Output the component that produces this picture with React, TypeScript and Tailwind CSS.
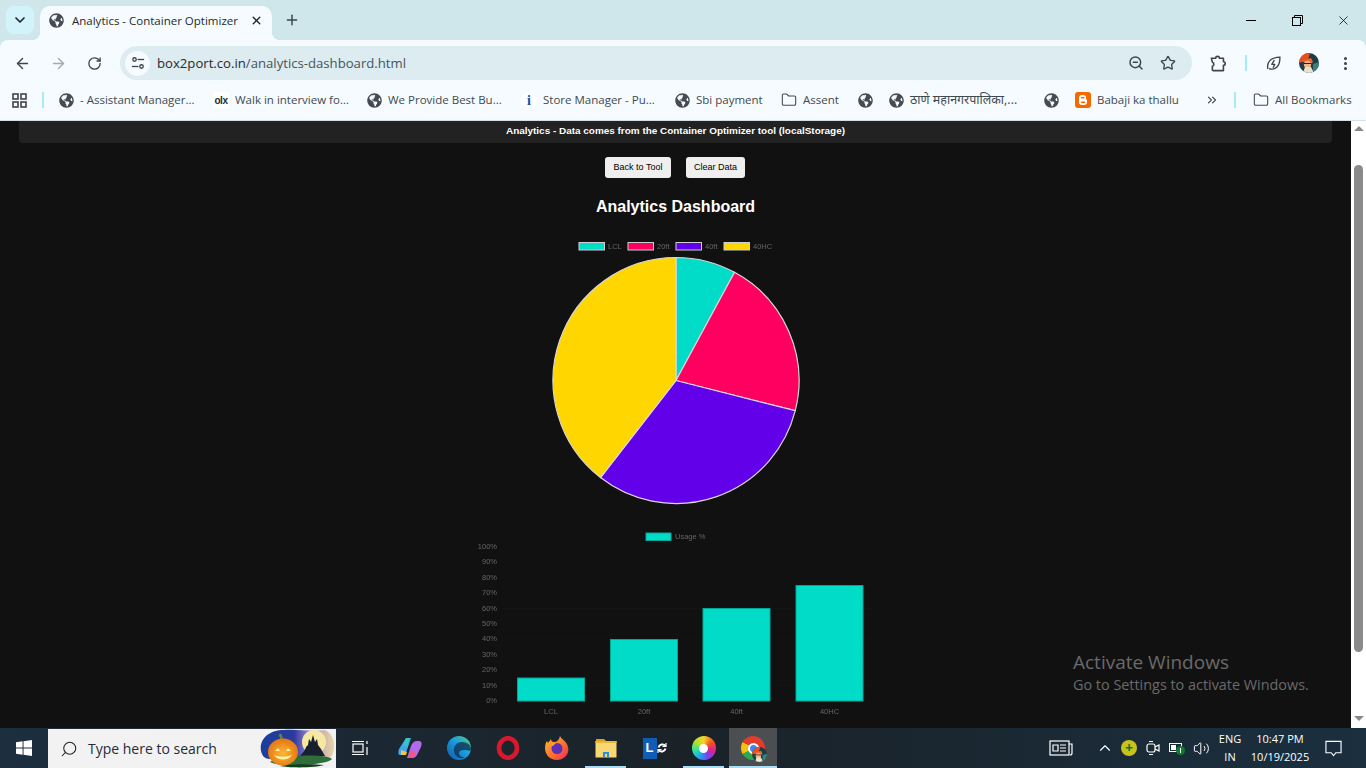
import React from "react";
import {
  ArrowLeft,
  ArrowRight,
  RotateCw,
  ZoomOut,
  Star,
  MoreVertical,
  X,
  Plus,
  ChevronDown,
  ChevronUp,
  ChevronsRight,
  Folder,
  Search,
  Volume2,
} from "lucide-react";
import { FaGlobeAmericas } from "react-icons/fa";

const UI_FONT = "font-['Open_Sans','Noto_Sans',sans-serif]";

const Globe = () => <FaGlobeAmericas className="w-[15px] h-[15px] shrink-0 text-[#454b50]" />;

const Olx = () => (
  <span className="w-4 h-4 shrink-0 bg-white flex items-center justify-center text-[10px] font-bold text-[#1c2b33] tracking-tighter font-['Liberation_Sans',sans-serif]">
    olx
  </span>
);

const InfoDot = () => (
  <span className="w-4 h-4 shrink-0 bg-white rounded-full flex items-center justify-center text-[14px] font-bold text-[#1c4fa0] font-['Liberation_Serif',serif]">
    i
  </span>
);

const Blogger = () => (
  <svg viewBox="0 0 16 16" className="w-4 h-4 shrink-0">
    <rect width="16" height="16" rx="3" fill="#f56a00" />
    <path d="M4 6a3 3 0 0 1 3-3h1.5A2.5 2.5 0 0 1 11 5.5V7l1 1v2a3 3 0 0 1-3 3H7a3 3 0 0 1-3-3z" fill="#fff" />
    <path d="M6.5 5.7h2.4M6.5 10.2h3.2" stroke="#f56a00" strokeWidth="1.4" strokeLinecap="round" />
  </svg>
);

const Bookmark = ({ icon, text, className, textClass }: { icon: React.ReactNode; text?: string; className: string; textClass?: string }) => (
  <div className={`flex items-center gap-[6px] shrink-0 ${className}`}>
    {icon}
    {text && <span className={`whitespace-nowrap ${textClass ?? ""}`}>{text}</span>}
  </div>
);

const TuneIcon = () => (
  <svg viewBox="0 0 16 16" className="w-[14px] h-[14px]" fill="none" stroke="#3c474d" strokeWidth="1.5">
    <circle cx="4" cy="4" r="2" />
    <path d="M7.5 4H15" />
    <circle cx="12" cy="12" r="2" />
    <path d="M1 12h7.5" />
  </svg>
);

const PuzzleIcon = () => (
  <svg viewBox="0 0 18 18" className="w-[17px] h-[17px]" fill="none" stroke="#3c474d" strokeWidth="1.7" strokeLinejoin="round">
    <path d="M1.5 3.5H6a2 2 0 0 1 4 0h4.2v3.7a1.9 1.9 0 0 1 0 3.8v5.5H3.5a1 1 0 0 1-1-1V12a2.3 2.3 0 0 0 0-4.4z" />
  </svg>
);

const LeafIcon = () => (
  <svg viewBox="0 0 20 20" className="w-[17px] h-[17px]" fill="none" stroke="#3c474d" strokeWidth="1.6">
    <path d="M3.5 16.5C1.5 9 6 3 17.5 2.5 18 13 12 18.5 4.8 16" />
    <path d="M11 6l-3 5h3.5l-2 4" strokeLinejoin="round" />
  </svg>
);

const Avatar = ({ className }: { className: string }) => (
  <svg viewBox="0 0 20 20" className={className}>
    <defs>
      <clipPath id="avatar-clip">
        <circle cx="10" cy="10" r="10" />
      </clipPath>
    </defs>
    <g clipPath="url(#avatar-clip)">
      <rect width="20" height="20" fill="#1f3b45" />
      <path d="M0 0h11L9 7 0 10z" fill="#e8501e" />
      <path d="M3 8l9-3 2 4-4 3z" fill="#f26a2c" />
      <circle cx="8.5" cy="11.5" r="3.6" fill="#f2b48a" />
      <path d="M4 20l2-6 6 0 3 6z" fill="#e9e1cf" />
      <path d="M14 11l6-2v11h-6z" fill="#3d7f7a" />
      <path d="M5 10.5h7" stroke="#222" strokeWidth="1" />
    </g>
  </svg>
);

const WinLogo = () => (
  <svg viewBox="0 0 17 17" className="w-4 h-4" fill="#fff">
    <path d="M0 2.4 7 1.4V8H0zM8 1.3 17 0v8H8zM0 9h7v6.6L0 14.6zM8 9h9v8l-9-1.3z" />
  </svg>
);

const Pumpkin = () => (
  <svg viewBox="0 0 76 39" className="w-[76px] h-[39px]">
    <defs>
      <linearGradient id="sky" x1="0" x2="1" y1="0" y2="0">
        <stop offset="0" stopColor="#1d3f9c" />
        <stop offset="0.45" stopColor="#2b3a9c" />
        <stop offset="0.7" stopColor="#b58fd8" />
        <stop offset="1" stopColor="#e8d89a" />
      </linearGradient>
      <radialGradient id="pumpkin-body" cx="0.5" cy="0.55" r="0.6">
        <stop offset="0" stopColor="#ffb638" />
        <stop offset="1" stopColor="#e0700c" />
      </radialGradient>
    </defs>
    <path d="M1 22C-1 10 9 1 24 1c14-1 28 2 41 0 8 3 11 14 8 23-2 6-6 8-10 6H10C5 30 2 27 1 22z" fill="url(#sky)" />
    <circle cx="54" cy="13" r="12" fill="#f4e8a2" />
    <path d="M40 27c3-4 5-5 6-9l2-2 1-6 2 3 2-7 2 7 2-3 1 6 3 4 4 7z" fill="#17202c" />
    <path d="M10 33c10-7 56-9 62-3-4 6-52 9-62 3z" fill="#2f6d3a" />
    <path d="M20 37c10-2 34-2 44-1-8 3-36 3-44 1z" fill="#123d1d" />
    <path d="M20 5l2 6" stroke="#5c8a3b" strokeWidth="2.6" />
    <ellipse cx="23" cy="23" rx="15" ry="13.5" fill="url(#pumpkin-body)" />
    <path d="M15 22l3-3 2 3zM31 22l-3-3-2 3z" fill="#fff3a6" />
    <path d="M14 26c4 6 14 6 18 0-5 2-13 2-18 0z" fill="#fff3a6" />
  </svg>
);

const Copilot = () => (
  <svg viewBox="0 0 24 24" className="w-6 h-6">
    <path d="M8 2h5l-4 12c-1 3-2 5-5 5H2C0 19 0 16 1 13z" fill="#3fa6f0" />
    <path d="M8 2h4L9 11 5 9z" fill="#37c6c0" />
    <path d="M14 22H9l4-12c1-3 3-5 6-5h2c3 0 3 3 2 6l-3 6c-1 3-3 5-6 5z" fill="#b36ae8" />
    <path d="M3 14l6 2-1 3H3z" fill="#f5c542" />
    <path d="M13 22h-3l3-8 5 3c-1 3-2 5-5 5z" fill="#f0568a" />
  </svg>
);

const Edge = () => (
  <svg viewBox="0 0 24 24" className="w-6 h-6">
    <defs>
      <linearGradient id="edge-a" x1="0" x2="1" y1="1" y2="0">
        <stop offset="0" stopColor="#0c59a4" />
        <stop offset="0.55" stopColor="#1b9de2" />
        <stop offset="1" stopColor="#52d17c" />
      </linearGradient>
    </defs>
    <circle cx="12" cy="12" r="12" fill="url(#edge-a)" />
    <path d="M24 13c0-4-4-7-9-7-6 0-9 5-8 10 1 4 5 7 10 6 2-1-5 0-5-5 0-2 2-3 5-3 4 0 7 2 7-1z" fill="#0e2a47" fillOpacity="0.72" />
  </svg>
);

const Opera = () => (
  <svg viewBox="0 0 24 24" className="w-6 h-6" fill="none">
    <ellipse cx="12" cy="12" rx="9" ry="9.8" stroke="#d8182c" strokeWidth="4.6" />
  </svg>
);

const Firefox = () => (
  <svg viewBox="0 0 24 24" className="w-6 h-6">
    <defs>
      <linearGradient id="ff-a" x1="0" x2="1" y1="0" y2="1">
        <stop offset="0" stopColor="#ffbd2e" />
        <stop offset="0.6" stopColor="#ff6a2c" />
        <stop offset="1" stopColor="#e8216a" />
      </linearGradient>
    </defs>
    <path d="M15 0c1 3 7 5 8 11 2 7-4 13-11 13S0 19 0 12c0-3 1-6 2-7l1 2 3-4c0 2 1 3 3 3 3 0 5-2 6-6z" fill="url(#ff-a)" />
    <circle cx="12" cy="12.5" r="5.5" fill="#5b2fb8" />
    <path d="M3 8c3-2 6-2 8-1l-3 3c-2 0-4 0-5-2z" fill="#ff9a1f" />
  </svg>
);

const Explorer = () => (
  <svg viewBox="0 0 22 20" className="w-[22px] h-5">
    <path d="M1 1h8l2 2H1z" fill="#d9a21f" />
    <rect x="0.5" y="3" width="21" height="16.5" fill="#f8d775" />
    <rect x="0.5" y="3" width="21" height="2" fill="#eab93a" />
    <path d="M8 19.5V14h6v5.5h-2V16h-2v3.5z" fill="#2a8fd8" />
  </svg>
);

const Lync = () => (
  <div className="flex items-center">
    <span className="w-[14px] h-[21px] bg-[#0f5db5] flex items-center justify-center text-white text-[13px] font-bold font-['Liberation_Sans',sans-serif]">
      L
    </span>
    <svg viewBox="0 0 10 12" className="w-[10px] h-3" fill="none" stroke="#fff" strokeWidth="2">
      <path d="M8.5 4A4 4 0 0 0 1.5 5.5M1.5 8A4 4 0 0 0 8.5 6.5" />
      <path d="M9 1v3.5H5.5M1 11V7.500h3.500" strokeWidth="1.2" />
    </svg>
  </div>
);

const ColorRing = () => (
  <span className="w-6 h-6 rounded-full bg-[conic-gradient(#f6d32d,#f5561d,#e0218a,#7b3ff2,#20a4f3,#2ee59d,#b7e21f,#f6d32d)] flex items-center justify-center">
    <span className="w-[9px] h-[9px] rounded-full bg-white" />
  </span>
);

const ChromeAvatar = () => (
  <span className="relative w-6 h-6 rounded-full bg-[conic-gradient(#e33b2e_0deg,#e33b2e_120deg,#2da94f_120deg,#2da94f_240deg,#f4c20d_240deg,#f4c20d_300deg,#e33b2e_300deg)] flex items-center justify-center">
    <span className="w-[11px] h-[11px] rounded-full bg-[#3f86f0] border-2 border-white" />
    <Avatar className="absolute -right-[2px] -bottom-[2px] w-[15px] h-[15px]" />
  </span>
);

const TaskItem = ({ children, open }: { children: React.ReactNode; open?: boolean }) => (
  <div className="relative w-[49px] h-full flex items-center justify-center shrink-0">
    {children}
    {open && <span className="absolute bottom-0 inset-x-[4px] h-[2px] bg-[#a9dcf5]" />}
  </div>
);

const TraySlot = ({ children }: { children: React.ReactNode }) => (
  <div className="w-6 h-full flex items-center justify-center shrink-0">{children}</div>
);

// pie slices are computed from the same numbers as the bar chart
const series = [
  { label: "LCL", value: 15, color: "#00dcc8" },
  { label: "20ft", value: 40, color: "#ff0060" },
  { label: "40ft", value: 60, color: "#6200ea" },
  { label: "40HC", value: 75, color: "#ffd600" },
];

function slicePaths(cx: number, cy: number, r: number) {
  const total = series.reduce((s, d) => s + d.value, 0);
  let start = -Math.PI / 2;
  return series.map(d => {
    const end = start + (d.value / total) * Math.PI * 2;
    const x1 = cx + r * Math.cos(start);
    const y1 = cy + r * Math.sin(start);
    const x2 = cx + r * Math.cos(end);
    const y2 = cy + r * Math.sin(end);
    const large = end - start > Math.PI ? 1 : 0;
    start = end;
    return { ...d, d: `M${cx} ${cy}L${x1} ${y1}A${r} ${r} 0 ${large} 1 ${x2} ${y2}Z` };
  });
}

const PieChart = () => {
  const legendX = [47, 96, 144, 192];
  return (
    <svg viewBox="0 0 288 288" className="w-[288px] h-[288px] block blur-[0.4px] font-['Liberation_Sans',sans-serif]">
      {series.map((d, i) => (
        <g key={d.label}>
          <rect x={legendX[i]} y={18.5} width={25.5} height={7.5} fill={d.color} stroke="#cfcfcf" strokeWidth="1" />
          <text x={legendX[i] + 29} y={25} fontSize="7.5" fill="#666">
            {d.label}
          </text>
        </g>
      ))}
      {slicePaths(144, 156.5, 123).map(s => (
        <path key={s.label} d={s.d} fill={s.color} stroke="#d8d8d8" strokeWidth="1.2" />
      ))}
    </svg>
  );
};

const BarChart = () => {
  const ticks = [100, 90, 80, 70, 60, 50, 40, 30, 20, 10, 0];
  const bars = [
    { label: "LCL", x: 49.5, h: 23 },
    { label: "20ft", x: 142.5, h: 61.5 },
    { label: "40ft", x: 235, h: 92.5 },
    { label: "40HC", x: 328, h: 115.5 },
  ];
  const base = 181;
  return (
    <svg viewBox="0 0 414 204" className="w-[414px] h-[204px] block blur-[0.4px] font-['Liberation_Sans',sans-serif]">
      <rect x={178} y={13} width={25} height={7.5} fill="#00dcc8" stroke="#00a898" strokeWidth="1" />
      <text x={207} y={19} fontSize="7.5" fill="#666">
        Usage %
      </text>
      {ticks.map((t, i) => (
        <g key={t}>
          <line x1={35} x2={405} y1={27 + i * 15.4} y2={27 + i * 15.4} stroke="#151515" strokeWidth="1" />
          <text x={29} y={29 + i * 15.4} fontSize="7.5" fill="#666" textAnchor="end">
            {t}%
          </text>
        </g>
      ))}
      {bars.map(b => (
        <g key={b.label}>
          <rect x={b.x} y={base - b.h} width={67} height={b.h} fill="#00dcc8" stroke="#00a898" strokeWidth="1" />
          <text x={b.x + 33.5} y={194} fontSize="7.5" fill="#666" textAnchor="middle">
            {b.label}
          </text>
        </g>
      ))}
    </svg>
  );
};

export default function App() {
  return (
    <div className={`w-[1366px] h-[768px] overflow-hidden flex flex-col bg-[#cfe6eb] ${UI_FONT}`}>
      {/* tab strip */}
      <div className="h-10 shrink-0 flex items-end text-[#1f2a30]">
        <div className="w-[28px] h-[28px] ml-[6px] mb-[6px] rounded-lg bg-[#d3f3fb] flex items-center justify-center">
          <ChevronDown className="w-4 h-4" strokeWidth={2.6} />
        </div>
        <div className="relative w-[232px] h-[34px] ml-[6px] rounded-t-[10px] bg-[#f5fbfe] flex items-center pl-[9px] pr-[9px] pb-[5px]">
          <Globe />
          <span className="ml-[8px] text-[11.5px] whitespace-nowrap flex-1">Analytics - Container Optimizer</span>
          <X className="w-[13px] h-[13px]" strokeWidth={2.6} />
          <span className="absolute -right-2 bottom-0 w-2 h-2 bg-[radial-gradient(circle_at_100%_0,transparent_8px,#f5fbfe_8px)]" />
          <span className="absolute -left-2 bottom-0 w-2 h-2 bg-[radial-gradient(circle_at_0_0,transparent_8px,#f5fbfe_8px)]" />
        </div>
        <Plus className="w-[16px] h-[16px] ml-[12px] mb-[12px] text-[#3c474d]" strokeWidth={2.2} />
        <div className="ml-auto flex items-center h-full text-black">
          <div className="w-[46px] flex justify-center">
            <span className="w-[10px] h-px bg-black" />
          </div>
          <div className="w-[46px] flex justify-center">
            <svg viewBox="0 0 11 11" className="w-[11px] h-[11px]" fill="none" stroke="#000" strokeWidth="1">
              <rect x="0.5" y="2.5" width="8" height="8" />
              <path d="M2.5 2.5v-2h8v8h-2" />
            </svg>
          </div>
          <div className="w-[46px] flex justify-center">
            <X className="w-[15px] h-[15px]" strokeWidth={1.2} />
          </div>
        </div>
      </div>

      {/* toolbar */}
      <div className="h-[41px] shrink-0 bg-[#f5fbfe] rounded-t-lg pt-[5px] flex items-center text-[#3c474d]">
        <div className="w-[120px] shrink-0 flex items-center">
          <ArrowLeft className="w-[17px] h-[17px] ml-[14px]" strokeWidth={2} />
          <ArrowRight className="w-[17px] h-[17px] ml-[19px] text-[#a3abaf]" strokeWidth={2} />
          <RotateCw className="w-[15px] h-[15px] ml-[20px]" strokeWidth={2.1} />
        </div>
        <div className="w-[1072px] h-[34px] rounded-full bg-[#dcecf0] flex items-center pl-[5px] pr-[16px]">
          <span className="w-[25px] h-[25px] rounded-full bg-[#f5fbfe] flex items-center justify-center">
            <TuneIcon />
          </span>
          <span className="ml-[7px] pt-px text-[13.15px] flex-1 text-[#46545b] whitespace-nowrap">
            <span className="text-[#1f2a30]">box2port.co.in</span>/analytics-dashboard.html
          </span>
          <ZoomOut className="w-[16px] h-[16px] mr-[16px]" strokeWidth={2.2} />
          <Star className="w-[16px] h-[16px]" strokeWidth={2} />
        </div>
        <span className="ml-[18px]">
          <PuzzleIcon />
        </span>
        <span className="w-[2px] h-[16px] ml-[18px] bg-[#a8e8f8]" />
        <span className="ml-[18px]">
          <LeafIcon />
        </span>
        <Avatar className="w-[20px] h-[20px] ml-[17px]" />
        <MoreVertical className="w-[17px] h-[17px] ml-[18px]" strokeWidth={2.4} />
      </div>

      {/* bookmarks bar */}
      <div className="h-10 shrink-0 bg-[#f5fbfe] border-b border-[#d5dfe3] pb-px flex items-center text-[11.5px] text-[#3f4a50]">
        <svg viewBox="0 0 15 15" className="w-[15px] h-[15px] ml-[12px] shrink-0" fill="none" stroke="#3c474d" strokeWidth="1.6">
          <rect x="1" y="1" width="5" height="5" />
          <rect x="9" y="1" width="5" height="5" />
          <rect x="1" y="9" width="5" height="5" />
          <rect x="9" y="9" width="5" height="5" />
        </svg>
        <span className="w-[2px] h-[16px] ml-[15px] mr-[15px] bg-[#a8e8f8] shrink-0" />
        <Bookmark className="w-[154px]" icon={<Globe />} text="- Assistant Manager..." />
        <Bookmark className="w-[154px]" icon={<Olx />} text="Walk in interview fo..." />
        <Bookmark className="w-[154px]" icon={<Globe />} text="We Provide Best Bu..." />
        <Bookmark className="w-[154px]" icon={<InfoDot />} text="Store Manager - Pu..." />
        <Bookmark className="w-[106px]" icon={<Globe />} text="Sbi payment" />
        <Bookmark className="w-[77px]" icon={<Folder className="w-[16px] h-[16px] shrink-0" strokeWidth={1.6} />} text="Assent" />
        <Bookmark className="w-[31px]" icon={<Globe />} />
        <Bookmark className="w-[155px]" icon={<Globe />} text="ठाणे महानगरपालिका,..." textClass="text-[12.5px]" />
        <Bookmark className="w-[31px]" icon={<Globe />} />
        <Bookmark className="w-[130px]" icon={<Blogger />} text="Babaji ka thallu" />
        <ChevronsRight className="w-[14px] h-[14px] shrink-0" strokeWidth={2} />
        <span className="w-[2px] h-[16px] ml-[15px] mr-[17px] bg-[#a8e8f8] shrink-0" />
        <Bookmark className="" icon={<Folder className="w-[16px] h-[16px] shrink-0" strokeWidth={1.6} />} text="All Bookmarks" />
      </div>

      {/* page */}
      <div className="relative h-[607px] shrink-0 flex overflow-hidden">
        <main className="flex-1 min-w-0 bg-[#111111] px-[19px] flex flex-col items-center font-['Liberation_Sans',sans-serif]">
          <div className="w-full h-[22px] shrink-0 bg-[#222222] rounded-b-[4px] pb-[2px] flex items-center justify-center text-white text-[9.95px] font-bold">
            Analytics - Data comes from the Container Optimizer tool (localStorage)
          </div>
          <div className="mt-[14px] mr-px flex gap-[15px]">
            <button className="w-[66px] h-[21px] pt-px bg-[#efefef] rounded-[3px] text-black text-[9px]">Back to Tool</button>
            <button className="w-[59px] h-[21px] pt-px bg-[#efefef] rounded-[3px] text-black text-[9px]">Clear Data</button>
          </div>
          <h1 className="mt-[19px] text-white text-[16px] leading-[19px] font-bold">Analytics Dashboard</h1>
          <div className="mt-[8px]">
            <PieChart />
          </div>
          <div className="mt-[8px] mr-px">
            <BarChart />
          </div>
        </main>
        <aside className="w-[15px] shrink-0 bg-white flex flex-col items-center">
          <span className="mt-[5px] w-0 h-0 border-x-[5px] border-x-transparent border-b-[5px] border-b-[#8a8a8a]" />
          <span className="mt-[34px] w-[9px] h-[487px] rounded-full bg-[#8a8a8a]" />
          <span className="mt-[64px] w-0 h-0 border-x-[5px] border-x-transparent border-t-[5px] border-t-[#8a8a8a]" />
        </aside>
        <div className="absolute left-[1073px] top-[529px] text-[#6a6a6a] pointer-events-none">
          <p className="text-[19px] leading-[24px]">Activate Windows</p>
          <p className="text-[14.4px] leading-[22px]">Go to Settings to activate Windows.</p>
        </div>
      </div>

      {/* taskbar */}
      <div className="flex-1 bg-gradient-to-r from-[#1c2f3f] via-[#1a2228] to-[#1a2f3f] flex items-center text-white">
        <div className="w-[48px] h-full flex items-center justify-center shrink-0">
          <WinLogo />
        </div>
        <div className="w-[288px] h-[39px] mt-[1px] shrink-0 bg-[#f2f2f2] flex items-center pl-[12px] text-[#1f2d3a] overflow-hidden">
          <Search className="w-[18px] h-[18px] -scale-x-100 text-[#222]" strokeWidth={1.4} />
          <span className="ml-[10px] text-[14px] flex-1 whitespace-nowrap">Type here to search</span>
          <Pumpkin />
        </div>
        <div className="w-[49px] h-full flex items-center justify-center shrink-0">
          <svg viewBox="0 0 17 16" className="w-[17px] h-4" fill="none" stroke="#fff" strokeWidth="1.2">
            <rect x="1" y="4" width="10" height="8" />
            <path d="M0 1.5h12M0 14.5h12M15 1v3M15 7v8" />
          </svg>
        </div>
        <TaskItem><Copilot /></TaskItem>
        <TaskItem><Edge /></TaskItem>
        <TaskItem><Opera /></TaskItem>
        <TaskItem><Firefox /></TaskItem>
        <TaskItem open><Explorer /></TaskItem>
        <TaskItem><Lync /></TaskItem>
        <TaskItem open><ColorRing /></TaskItem>
        <div className="relative w-[48px] ml-px h-full bg-[#4c4f52] flex items-center justify-center shrink-0">
          <ChromeAvatar />
          <span className="absolute bottom-0 inset-x-0 h-[2px] bg-[#a9dcf5]" />
        </div>
        <div className="ml-auto flex items-center h-full text-[11px]">
          <div className="w-6 mr-[20px] flex justify-center">
            <svg viewBox="0 0 24 16" className="w-6 h-4" fill="none" stroke="#fff" strokeWidth="1.2">
              <rect x="1" y="1" width="19" height="14" />
              <path d="M20 4h3v9a2 2 0 0 1-2 2M4 5h5v6H4zM11 5h6M11 8h6M11 11h6" />
            </svg>
          </div>
          <TraySlot>
            <ChevronUp className="w-[18px] h-[18px]" strokeWidth={1.5} />
          </TraySlot>
          <TraySlot>
            <span className="w-4 h-4 rounded-full bg-[#c8c21a] flex items-center justify-center text-[#0c7a25] text-[14px] leading-none font-bold">+</span>
          </TraySlot>
          <TraySlot>
            <svg viewBox="0 0 14 16" className="w-[14px] h-4" fill="none" stroke="#fff" strokeWidth="1.2">
              <rect x="1" y="4" width="8" height="8" rx="2" />
              <path d="M9 7l4-2v6l-4-2M3 1.5h4M3 14.5h4" />
            </svg>
          </TraySlot>
          <TraySlot>
            <svg viewBox="0 0 16 14" className="w-4 h-[14px]" fill="none">
              <rect x="0.5" y="2.5" width="12" height="8" stroke="#fff" />
              <rect x="2" y="4" width="5" height="5" fill="#fff" />
              <circle cx="11.5" cy="9.5" r="4.5" fill="#0f7b2e" />
              <path d="M11.5 7v5" stroke="#fff" />
            </svg>
          </TraySlot>
          <TraySlot>
            <Volume2 className="w-[17px] h-[17px]" strokeWidth={1.4} />
          </TraySlot>
          <div className="w-[34px] text-center leading-[18px]">
            <div>ENG</div>
            <div>IN</div>
          </div>
          <div className="w-[66px] text-center leading-[18px] whitespace-nowrap">
            <div>10:47 PM</div>
            <div>10/19/2025</div>
          </div>
          <div className="w-[41px] mr-[12px] flex justify-center">
            <svg viewBox="0 0 18 18" className="w-[17px] h-[17px]" fill="none" stroke="#fff" strokeWidth="1.2">
              <path d="M1 1.500h16v12H11.500L9 16.500 6.500 13.500H1z" />
            </svg>
          </div>
        </div>
      </div>
    </div>
  );
}
